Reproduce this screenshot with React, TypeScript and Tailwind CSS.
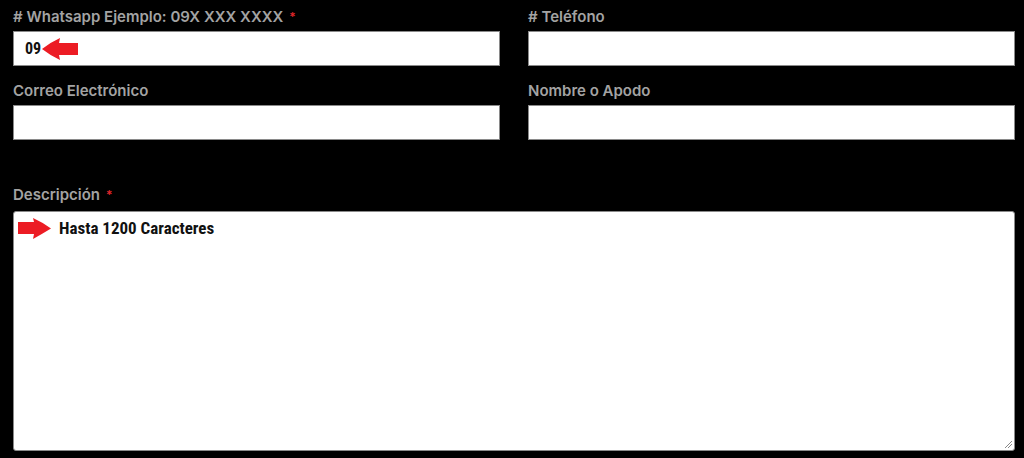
import React from "react";

const labelCls =
  "block text-[15px] leading-[20px] font-semibold text-[#a3a3a3] mb-[4px]";
const inputCls =
  "block w-full h-[35px] bg-white border border-[#8a8a8a] outline-none";

function Req() {
  return <span className="text-[#e0262b] ml-[6px] text-[12px] align-top">*</span>;
}

function LeftArrow() {
  return (
    <svg width="36" height="22" viewBox="0 0 36 22" className="block">
      <path d="M0,11 Q9,4 18,0 L17,5 L36,5 L36,17 L17,17 L18,22 Q9,18 0,11 Z" fill="#ec1c24" />
    </svg>
  );
}

function RightArrow() {
  return (
    <svg width="33" height="21" viewBox="0 0 33 21" className="block">
      <path d="M33,10.5 Q24,4 15,0 L16,4 L0,4 L0,16 L16,16 L15,21 Q24,16 33,10.5 Z" fill="#ec1c24" />
    </svg>
  );
}

export default function App() {
  return (
    <div
      className="w-full h-[458px] bg-black pl-[13px] pr-[9px] pt-[7px] overflow-hidden"
      style={{ fontFamily: "Inter, 'Open Sans', sans-serif" }}
    >
      <div className="grid grid-cols-2 gap-x-[28px] gap-y-[15px]">
        <div>
          <label className={labelCls}>
            # Whatsapp Ejemplo: 09X XXX XXXX
            <Req />
          </label>
          <div className={inputCls + " flex items-center pl-[11px]"}>
            <span
              className="text-[16px] font-bold text-[#111]"
              style={{ fontFamily: "'Liberation Sans Narrow', 'Roboto Condensed', Roboto, sans-serif" }}
            >
              09
            </span>
            <span className="ml-[1px]">
              <LeftArrow />
            </span>
          </div>
        </div>
        <div>
          <label className={labelCls}># Teléfono</label>
          <div className={inputCls} />
        </div>
        <div>
          <label className={labelCls}>Correo Electrónico</label>
          <div className={inputCls} />
        </div>
        <div>
          <label className={labelCls}>Nombre o Apodo</label>
          <div className={inputCls} />
        </div>
      </div>
      <div className="mt-[45px]">
        <label className={labelCls + " mb-[6px]"}>
          Descripción
          <Req />
        </label>
        <div className="relative w-full h-[240px] bg-white border border-[#8a8a8a] rounded-[3px] pl-[4px] pt-[4px]">
          <div className="flex items-center gap-[8px]">
            <RightArrow />
            <span
              className="text-[17px] font-bold text-[#111]"
              style={{ fontFamily: "'Liberation Sans Narrow', 'Roboto Condensed', Roboto, sans-serif" }}
            >
              Hasta 1200 Caracteres
            </span>
          </div>
          <svg
            width="10"
            height="10"
            viewBox="0 0 10 10"
            className="absolute right-[1px] bottom-[1px]"
          >
            <line x1="9" y1="2" x2="2" y2="9" stroke="#888" strokeWidth="1" />
            <line x1="9" y1="5" x2="5" y2="9" stroke="#888" strokeWidth="1" />
          </svg>
        </div>
      </div>
    </div>
  );
}
